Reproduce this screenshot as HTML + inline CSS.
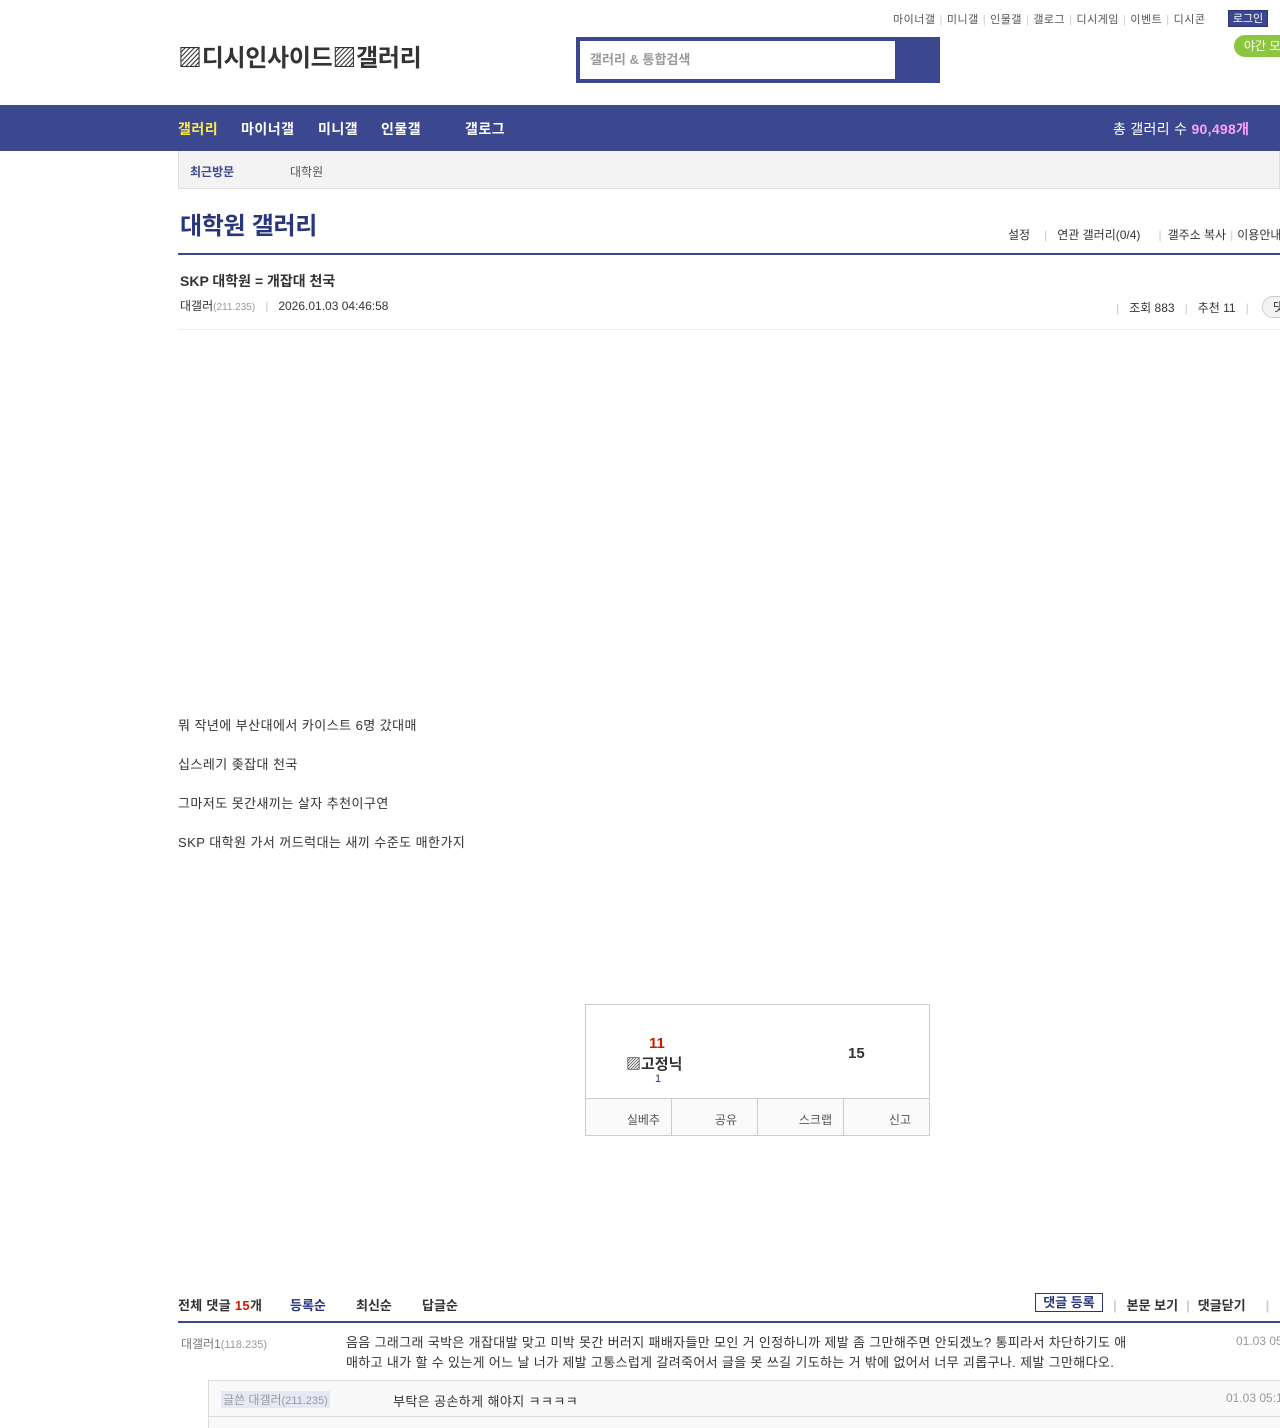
<!DOCTYPE html>
<html><head><meta charset="utf-8"><style>
*{margin:0;padding:0;box-sizing:border-box}
body{width:1280px;height:1428px;overflow:hidden;background:#fff;font-family:"Liberation Sans","Noto Sans CJK KR",sans-serif;color:#333;position:relative}
.a{position:absolute;white-space:nowrap}
.top{font-size:11px;color:#555;top:11px;letter-spacing:0.5px}
.sep{color:#ccc;margin:0 4px}
.ls{letter-spacing:0.45px}
</style></head><body>
<div class="a top" style="left:893px">마이너갤<span class="sep">|</span>미니갤<span class="sep">|</span>인물갤<span class="sep">|</span>갤로그<span class="sep">|</span>디시게임<span class="sep">|</span>이벤트<span class="sep">|</span>디시콘</div>
<div class="a" style="left:1228px;top:10px;width:40px;height:17px;background:#3b4890;color:#fff;font-size:11px;text-align:center;line-height:17px;border:1px solid #2a3570">로그인</div>
<div class="a" style="left:1234px;top:35px;width:60px;height:22px;background:#8cc63f;color:#fff;font-size:12px;line-height:22px;padding-left:10px;border-radius:11px">야간 모드</div>
<div class="a" style="left:178px;top:38px;font-size:24px;font-weight:bold;color:#333;letter-spacing:-0.3px">▨디시인사이드▨갤러리</div>
<div class="a" style="left:576px;top:37px;width:364px;height:46px;background:#3b4890"></div>
<div class="a" style="left:580px;top:41px;width:315px;height:38px;background:#fff;font-size:13px;color:#999;line-height:38px;padding-left:10px;font-weight:bold">갤러리 &amp; 통합검색</div>
<div class="a" style="left:0;top:105px;width:1280px;height:46px;background:#3b4890"></div>
<div class="a" style="left:178px;top:119px;font-size:14px;font-weight:bold;color:#fff;letter-spacing:0.5px"><span style="color:#ffec41">갤러리</span></div>
<div class="a" style="left:241px;top:119px;font-size:14px;font-weight:bold;color:#fff;letter-spacing:0.5px">마이너갤</div>
<div class="a" style="left:318px;top:119px;font-size:14px;font-weight:bold;color:#fff;letter-spacing:0.5px">미니갤</div>
<div class="a" style="left:381px;top:119px;font-size:14px;font-weight:bold;color:#fff;letter-spacing:0.5px">인물갤</div>
<div class="a" style="left:465px;top:119px;font-size:14px;font-weight:bold;color:#fff;letter-spacing:0.5px">갤로그</div>
<div class="a" style="left:1113px;top:119px;font-size:14px;color:#fff;letter-spacing:0.3px">총 갤러리 수 <b style="color:#ffa1ff">90,498개</b></div>
<div class="a" style="left:178px;top:151px;width:1102px;height:38px;background:#f3f3f3;border:1px solid #ddd;border-top:none"></div>
<div class="a" style="left:190px;top:163px;font-size:12px;font-weight:bold;color:#3b4890">최근방문</div>
<div class="a" style="left:290px;top:163px;font-size:12px;color:#555">대학원</div>
<div class="a" style="left:180px;top:206px;font-size:24px;font-weight:bold;color:#29367c;letter-spacing:-0.3px">대학원 갤러리</div>
<div class="a" style="left:1008px;top:226px;font-size:12px;color:#333">설정<span class="sep" style="margin:0 10px 0 14px">|</span>연관 갤러리(0/4)<span class="sep" style="margin:0 6px 0 18px">|</span>갤주소 복사<span class="sep">|</span>이용안내</div>
<div class="a" style="left:178px;top:253px;width:1102px;height:2px;background:#3b4890"></div>
<div class="a" style="left:180px;top:271px;font-size:14px;font-weight:bold;color:#333">SKP 대학원 = 개잡대 천국</div>
<div class="a" style="left:180px;top:297px;font-size:12px;color:#333">대갤러<span style="font-size:10px;color:#999">(211.235)</span><span class="sep" style="margin:0 10px">|</span>2026.01.03 04:46:58</div>
<div class="a" style="left:1112px;top:299px;font-size:12px;color:#333"><span class="sep" style="margin-right:10px">|</span>조회 883<span class="sep" style="margin:0 10px">|</span>추천 11<span class="sep" style="margin:0 10px">|</span></div>
<div class="a" style="left:1262px;top:296px;width:30px;height:22px;border:1px solid #ccc;border-radius:11px;background:#f3f3f3;font-size:12px;padding-left:10px;line-height:20px">댓글</div>
<div class="a" style="left:178px;top:329px;width:1102px;height:1px;background:#eee"></div>
<div class="a ls" style="left:178px;top:706px;font-size:13px;line-height:39px;color:#333">뭐 작년에 부산대에서 카이스트 6명 갔대매<br>십스레기 좆잡대 천국<br>그마저도 못간새끼는 살자 추천이구연<br>SKP 대학원 가서 꺼드럭대는 새끼 수준도 매한가지</div>
<div class="a" style="left:585px;top:1004px;width:345px;height:132px;border:1px solid #ccc"></div>
<div class="a" style="left:649px;top:1035px;font-size:15px;font-weight:bold;color:#d31900">11</div>
<div class="a" style="left:626px;top:1053px;font-size:15px;font-weight:bold;color:#333">▨고정닉</div>
<div class="a" style="left:655px;top:1073px;font-size:11px;color:#29367c">1</div>
<div class="a" style="left:848px;top:1045px;font-size:15px;font-weight:bold;color:#333">15</div>
<div class="a" style="left:586px;top:1098px;width:343px;height:37px;background:#fafafa;border-top:1px solid #ccc;display:flex;font-size:12px;color:#555">
<div style="width:86px;border-right:1px solid #ccc;text-align:right;padding:12px 11px 0 0">실베추</div>
<div style="width:86px;border-right:1px solid #ccc;text-align:right;padding:12px 20px 0 0">공유</div>
<div style="width:86px;border-right:1px solid #ccc;text-align:right;padding:12px 11px 0 0">스크랩</div>
<div style="flex:1;text-align:right;padding:12px 18px 0 0">신고</div></div>
<div class="a" style="left:178px;top:1295px;font-size:13px;font-weight:bold;color:#333;letter-spacing:0.3px">전체 댓글 <span style="color:#d31900">15</span>개</div>
<div class="a" style="left:290px;top:1295px;font-size:13px;font-weight:bold;color:#29367c">등록순</div>
<div class="a" style="left:356px;top:1295px;font-size:13px;font-weight:bold;color:#333">최신순</div>
<div class="a" style="left:422px;top:1295px;font-size:13px;font-weight:bold;color:#333">답글순</div>
<div class="a" style="left:1035px;top:1293px;width:68px;height:19px;border:1px solid #29367c;font-size:13px;font-weight:bold;color:#29367c;text-align:center;line-height:17px">댓글 등록</div>
<div class="a" style="left:1109px;top:1295px;font-size:13px;font-weight:bold;color:#333"><span class="sep" style="margin-right:10px">|</span>본문 보기<span class="sep" style="margin:0 8px">|</span>댓글닫기<span class="sep" style="margin-left:20px">|</span></div>
<div class="a" style="left:178px;top:1321px;width:1102px;height:2px;background:#3b4890"></div>
<div class="a" style="left:181px;top:1335px;font-size:12px;color:#777">대갤러1<span style="font-size:11px;color:#999">(118.235)</span></div>
<div class="a" style="left:346px;top:1333px;font-size:13px;line-height:20px;color:#333;letter-spacing:0.35px">음음 그래그래 국박은 개잡대발 맞고 미박 못간 버러지 패배자들만 모인 거 인정하니까 제발 좀 그만해주면 안되겠노? 통피라서 차단하기도 애<br>매하고 내가 할 수 있는게 어느 날 너가 제발 고통스럽게 갈려죽어서 글을 못 쓰길 기도하는 거 밖에 없어서 너무 괴롭구나. 제발 그만해다오.</div>
<div class="a" style="left:1236px;top:1334px;font-size:12px;color:#999">01.03 05:10</div>
<div class="a" style="left:208px;top:1380px;width:1072px;height:48px;background:#f9f9f9;border-top:1px solid #ddd;border-left:1px solid #ddd"></div>
<div class="a" style="left:208px;top:1416px;width:1072px;height:1px;background:#ddd"></div>
<div class="a" style="left:221px;top:1391px;font-size:12px;color:#999;background:#e6e9f5;padding:0 2px">글쓴 대갤러<span style="font-size:11px">(211.235)</span></div>
<div class="a" style="left:393px;top:1391px;font-size:13px;color:#333;letter-spacing:0.4px">부탁은 공손하게 해야지 ㅋㅋㅋㅋ</div>
<div class="a" style="left:1226px;top:1391px;font-size:12px;color:#999">01.03 05:12</div>
</body></html>
